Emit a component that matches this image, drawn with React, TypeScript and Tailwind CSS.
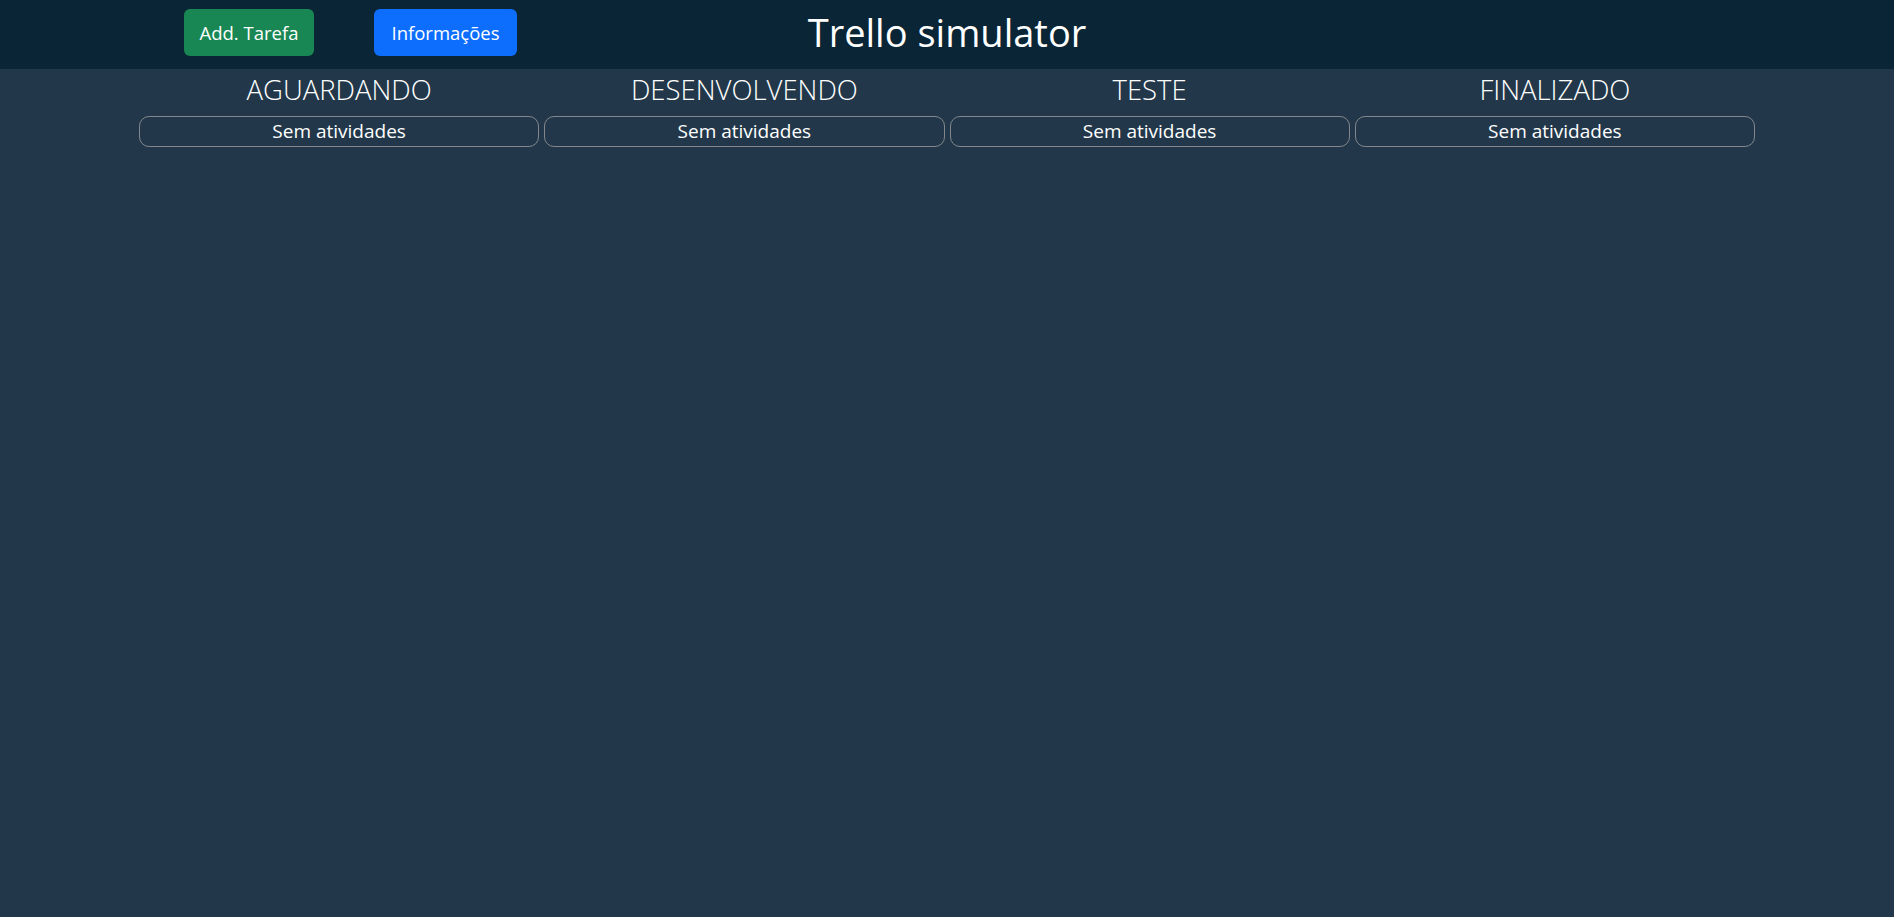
import React from "react";

const cols = ["AGUARDANDO", "DESENVOLVENDO", "TESTE", "FINALIZADO"];

export default function App() {
  return (
    <div
      className="min-h-[917px] w-full bg-[#22384a] text-white"
      style={{ fontFamily: '"Open Sans", "Noto Sans", sans-serif' }}
    >
      <header className="relative flex h-[69px] items-start bg-[#0a2535] pt-[9px]">
        <div className="flex gap-[60px] pl-[184px]">
          <button className="h-[47px] w-[130px] rounded-[6px] bg-[#198754] text-[18.5px] text-white">
            Add. Tarefa
          </button>
          <button className="h-[47px] w-[143px] rounded-[6px] bg-[#0d6efd] text-[18.5px] text-white">
            Informações
          </button>
        </div>
        <h1 className="absolute left-1/2 top-[3px] -translate-x-1/2 text-[38px] leading-[58px] text-white">
          Trello simulator
        </h1>
      </header>
      <main className="mx-auto grid w-[1616px] grid-cols-4 gap-x-[5px] pt-[2px]">
        {cols.map((c) => (
          <div key={c} className="flex flex-col items-center">
            <h3 className="text-[27.5px] font-light leading-[38px] text-white">{c}</h3>
            <div className="mt-[7px] flex h-[31px] w-full items-center justify-center rounded-[10px] border border-[#83878b] text-[19px] leading-none text-white">
              Sem atividades
            </div>
          </div>
        ))}
      </main>
    </div>
  );
}
